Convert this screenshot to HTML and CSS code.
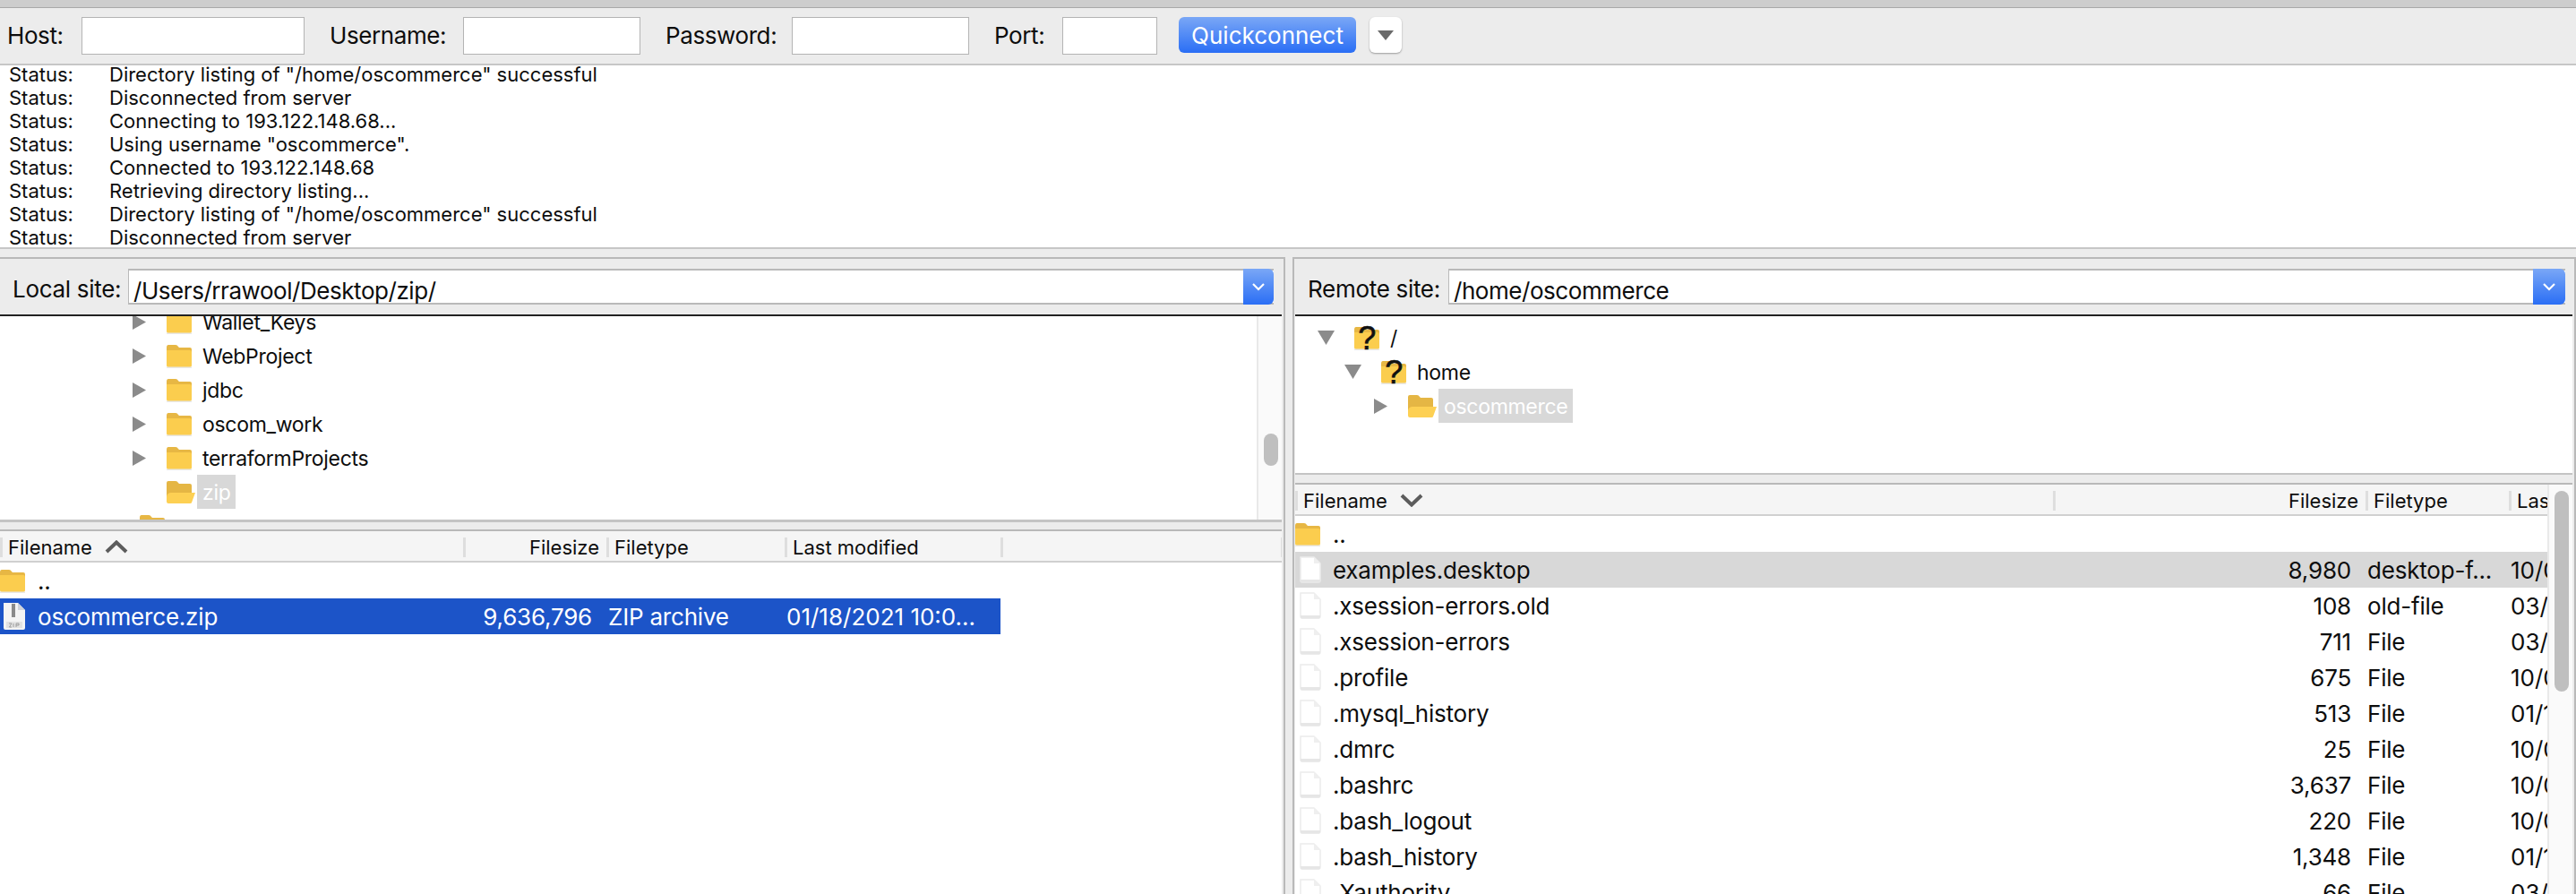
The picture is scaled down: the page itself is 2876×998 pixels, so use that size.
FILE: index.html
```html
<!DOCTYPE html>
<html lang="en">
<head>
<meta charset="utf-8">
<title>FileZilla</title>
<link rel="stylesheet" href="styles.css">
</head>
<body>
<svg class="defs" width="0" height="0" aria-hidden="true">
  <symbol id="folder" viewBox="0 0 28 27">
    <path d="M0 4 Q0 1 2 1 H10 Q12 1 13 3 L14 4 H26 Q28 4 28 6 V10 H0Z" fill="#e7b744"/>
    <path d="M0 7 H26 Q28 7 28 9 V24 Q28 26 26 26 H2 Q0 26 0 24Z" fill="#fbcd4e"/>
    <path d="M0 25.5 H28 V27 H0Z" fill="#e8e8e8"/>
  </symbol>
  <symbol id="folder-open" viewBox="0 0 32 27">
    <path d="M0 3 Q0 1 2 1 H10 Q12 1 13 3 L14 4 H26 Q28 4 28 6 V24 H0Z" fill="#e5b644"/>
    <path d="M5 14 H32 L28 25 Q28 26 26 26 H2 Q0 26 0 24 V18 Q1 14 5 14Z" fill="#fdd053"/>
  </symbol>
  <symbol id="file" viewBox="0 0 24 30">
    <path d="M1 1 H16 L23 8 V27 Q23 29 21 29 H3 Q1 29 1 27Z" fill="#fff" stroke="#ececec" stroke-width="1.5"/>
    <path d="M1 26 H23 V28 Q23 29.500 21 29.500 H3 Q1 29.500 1 28Z" fill="#e6e6e6"/>
    <path d="M16 1 L23 8 H16Z" fill="#efefef"/>
  </symbol>
  <symbol id="zipfile" viewBox="0 0 24 30">
    <path d="M0 0 H16 L24 8 V28 Q24 30 22 30 H2 Q0 30 0 28Z" fill="#f4f4f4"/>
    <path d="M16 0 L24 8 H16Z" fill="#cfd3da"/>
    <path d="M9 1 H13 V16 H9Z" fill="#8a8a8a"/>
    <path d="M3 21 H21 V28 H3Z" fill="#e2e2e2"/>
    <path d="M6 23 H9 L6.500 27 H9 M11 23 V27 M14 27 V23 H17 V25 H14" fill="none" stroke="#8f8f8f" stroke-width=".8"/>
  </symbol>
  <symbol id="tw-right" viewBox="0 0 15 17"><path d="M0 0 L15 8.500 L0 17Z" fill="#8b8b8b"/></symbol>
  <symbol id="tw-down" viewBox="0 0 19 16"><path d="M0 0 H19 L9.500 16Z" fill="#8b8b8b"/></symbol>
  <symbol id="chev" viewBox="0 0 16 10"><path d="M2 2 L8 8 L14 2" fill="none" stroke="#fff" stroke-width="2.200"/></symbol>
  <symbol id="sort-up" viewBox="0 0 26 15"><path d="M2 13 L13 2.500 L24 13" fill="none" stroke="#5c5c5c" stroke-width="4"/></symbol>
  <symbol id="sort-down" viewBox="0 0 26 15"><path d="M2 2 L13 12.500 L24 2" fill="none" stroke="#5c5c5c" stroke-width="4"/></symbol>
</svg>

<div class="app">
  <div class="titlebar"></div>

  <div class="toolbar">
    <label class="tb-label host-label">Host:</label><input class="tb-input host-input" type="text">
    <label class="tb-label user-label">Username:</label><input class="tb-input user-input" type="text">
    <label class="tb-label pass-label">Password:</label><input class="tb-input user-input" type="text">
    <label class="tb-label port-label">Port:</label><input class="tb-input port-input" type="text">
    <button class="quick" type="button">Quickconnect</button>
    <button class="quick-menu" type="button"><span class="menu-tri"></span></button>
  </div>

  <div class="log">
    <div class="log-line"><span class="log-kind">Status:</span><span>Directory listing of "/home/oscommerce" successful</span></div>
    <div class="log-line"><span class="log-kind">Status:</span><span>Disconnected from server</span></div>
    <div class="log-line"><span class="log-kind">Status:</span><span>Connecting to 193.122.148.68...</span></div>
    <div class="log-line"><span class="log-kind">Status:</span><span>Using username "oscommerce".</span></div>
    <div class="log-line"><span class="log-kind">Status:</span><span>Connected to 193.122.148.68</span></div>
    <div class="log-line"><span class="log-kind">Status:</span><span>Retrieving directory listing...</span></div>
    <div class="log-line"><span class="log-kind">Status:</span><span>Directory listing of "/home/oscommerce" successful</span></div>
    <div class="log-line"><span class="log-kind">Status:</span><span>Disconnected from server</span></div>
  </div>

  <div class="panes">
    <section class="pane pane-local">
      <div class="sitebar">
        <span class="site-label local-label">Local site:</span>
        <div class="combo"><span class="combo-text">/Users/rrawool/Desktop/zip/</span><span class="combo-btn"><svg class="chev"><use href="#chev"/></svg></span></div>
      </div>
      <div class="tree tree-local">
        <div class="tree-body tree-scrolled">
          <div class="node l3"><span class="tw"><svg class="tw-r"><use href="#tw-right"/></svg></span><span class="ic"><svg class="folder"><use href="#folder"/></svg></span><span class="node-label">Wallet_Keys</span></div>
          <div class="node l3"><span class="tw"><svg class="tw-r"><use href="#tw-right"/></svg></span><span class="ic"><svg class="folder"><use href="#folder"/></svg></span><span class="node-label">WebProject</span></div>
          <div class="node l3"><span class="tw"><svg class="tw-r"><use href="#tw-right"/></svg></span><span class="ic"><svg class="folder"><use href="#folder"/></svg></span><span class="node-label">jdbc</span></div>
          <div class="node l3"><span class="tw"><svg class="tw-r"><use href="#tw-right"/></svg></span><span class="ic"><svg class="folder"><use href="#folder"/></svg></span><span class="node-label">oscom_work</span></div>
          <div class="node l3"><span class="tw"><svg class="tw-r"><use href="#tw-right"/></svg></span><span class="ic"><svg class="folder"><use href="#folder"/></svg></span><span class="node-label">terraformProjects</span></div>
          <div class="node l3"><span class="tw"></span><span class="ic"><svg class="folder-open"><use href="#folder-open"/></svg></span><span class="node-label selected">zip</span></div>
          <div class="node l2"><span class="tw"></span><span class="ic"><svg class="folder"><use href="#folder"/></svg></span></div>
        </div>
        <div class="track"><div class="thumb thumb-tree"></div></div>
      </div>
      <div class="files files-local">
        <div class="file-table">
          <div class="fhead cols-local">
            <div class="hcell">Filename<svg class="sort"><use href="#sort-up"/></svg></div>
            <div class="hcell right">Filesize</div>
            <div class="hcell">Filetype</div>
            <div class="hcell">Last modified</div>
            <div class="hcell"></div>
            <div class="hcell"></div>
          </div>
          <div class="frow cols-local">
            <div class="fname"><svg class="folder"><use href="#folder"/></svg>..</div>
          </div>
          <div class="frow cols-local row-active">
            <div class="fname"><svg class="zip"><use href="#zipfile"/></svg>oscommerce.zip</div>
            <div class="fsize">9,636,796</div>
            <div class="ftype">ZIP archive</div>
            <div class="fdate">01/18/2021 10:0...</div>
          </div>
        </div>
      </div>
    </section>

    <section class="pane pane-remote">
      <div class="sitebar">
        <span class="site-label remote-label">Remote site:</span>
        <div class="combo combo-remote"><span class="combo-text">/home/oscommerce</span><span class="combo-btn"><svg class="chev"><use href="#chev"/></svg></span></div>
      </div>
      <div class="tree tree-remote">
        <div class="tree-body tree-top">
          <div class="node r0"><span class="tw"><svg class="tw-d"><use href="#tw-down"/></svg></span><span class="ic ic-q"><svg class="folder"><use href="#folder"/></svg><span class="q">?</span></span><span class="node-label">/</span></div>
          <div class="node r1"><span class="tw"><svg class="tw-d"><use href="#tw-down"/></svg></span><span class="ic ic-q"><svg class="folder"><use href="#folder"/></svg><span class="q">?</span></span><span class="node-label">home</span></div>
          <div class="node r2"><span class="tw"><svg class="tw-r"><use href="#tw-right"/></svg></span><span class="ic"><svg class="folder-open"><use href="#folder-open"/></svg></span><span class="node-label selected">oscommerce</span></div>
        </div>
      </div>
      <div class="files files-remote">
        <div class="file-table">
          <div class="fhead cols-remote">
            <div class="hcell">Filename<svg class="sort"><use href="#sort-down"/></svg></div>
            <div class="hcell right">Filesize</div>
            <div class="hcell">Filetype</div>
            <div class="hcell">Last</div>
          </div>
          <div class="frow cols-remote"><div class="fname"><svg class="folder"><use href="#folder"/></svg>..</div></div>
          <div class="frow cols-remote row-current"><div class="fname"><svg class="file"><use href="#file"/></svg>examples.desktop</div><div class="fsize">8,980</div><div class="ftype">desktop-f...</div><div class="fdate">10/0</div></div>
          <div class="frow cols-remote"><div class="fname"><svg class="file"><use href="#file"/></svg>.xsession-errors.old</div><div class="fsize">108</div><div class="ftype">old-file</div><div class="fdate">03/</div></div>
          <div class="frow cols-remote"><div class="fname"><svg class="file"><use href="#file"/></svg>.xsession-errors</div><div class="fsize">711</div><div class="ftype">File</div><div class="fdate">03/</div></div>
          <div class="frow cols-remote"><div class="fname"><svg class="file"><use href="#file"/></svg>.profile</div><div class="fsize">675</div><div class="ftype">File</div><div class="fdate">10/0</div></div>
          <div class="frow cols-remote"><div class="fname"><svg class="file"><use href="#file"/></svg>.mysql_history</div><div class="fsize">513</div><div class="ftype">File</div><div class="fdate">01/1</div></div>
          <div class="frow cols-remote"><div class="fname"><svg class="file"><use href="#file"/></svg>.dmrc</div><div class="fsize">25</div><div class="ftype">File</div><div class="fdate">10/0</div></div>
          <div class="frow cols-remote"><div class="fname"><svg class="file"><use href="#file"/></svg>.bashrc</div><div class="fsize">3,637</div><div class="ftype">File</div><div class="fdate">10/0</div></div>
          <div class="frow cols-remote"><div class="fname"><svg class="file"><use href="#file"/></svg>.bash_logout</div><div class="fsize">220</div><div class="ftype">File</div><div class="fdate">10/0</div></div>
          <div class="frow cols-remote"><div class="fname"><svg class="file"><use href="#file"/></svg>.bash_history</div><div class="fsize">1,348</div><div class="ftype">File</div><div class="fdate">01/1</div></div>
          <div class="frow cols-remote"><div class="fname"><svg class="file"><use href="#file"/></svg>.Xauthority</div><div class="fsize">66</div><div class="ftype">File</div><div class="fdate">03/</div></div>
        </div>
        <div class="track"><div class="thumb thumb-files"></div></div>
      </div>
    </section>
  </div>
</div>
</body>
</html>
```

FILE: styles.css
```css
* { box-sizing: border-box; }
html, body { margin: 0; height: 100%; overflow: hidden; }
body { background: #ececec; color: #0d0d0d; font-family: Inter, "Liberation Sans", sans-serif; }
.defs { display: block; height: 0; }
.app { height: 998px; overflow: hidden; }

.titlebar { height: 9px; background: #cdcdcd; border-bottom: 1px solid #a8a8a8; }

.toolbar { height: 64px; padding-top: 10px; display: flex; align-items: flex-start; border-bottom: 2px solid #c6c6c6; background: #ececec; font-size: 26px; }
.tb-label { height: 42px; line-height: 42px; margin-left: 28px; letter-spacing: -0.4px; white-space: nowrap; }
.host-label { margin-left: 8px; width: 83px; }
.user-label { width: 149px; }
.pass-label { width: 141px; }
.port-label { width: 76px; }
.tb-input { height: 42px; padding: 0; background: #fff; border: 1.5px solid #b4b4b4; outline: none; }
.host-input { width: 249px; }
.user-input { width: 198px; }
.port-input { width: 106px; }
.quick { margin-left: 24px; width: 198px; height: 40px; padding: 0; border: 0; border-radius: 6px; background: linear-gradient(#7aa7f6, #2a6ef5); color: #fff; font: inherit; font-size: 26px; }
.quick-menu { margin-left: 15px; width: 36px; height: 40px; padding: 0; border: 0; border-radius: 6px; background: #fff; box-shadow: 0 1px 2px rgba(0,0,0,.35); display: flex; align-items: center; justify-content: center; }
.menu-tri { width: 0; height: 0; border-left: 9px solid transparent; border-right: 9px solid transparent; border-top: 11px solid #6a6a6a; }

.log { height: 205px; background: #fff; border-bottom: 2px solid #c6c6c6; font-size: 22px; }
.log-line { height: 26px; line-height: 26px; display: flex; padding-left: 10px; white-space: nowrap; }
.log-line:first-child { height: 23px; line-height: 20px; }
.log-line:last-child { height: 22px; line-height: 22px; margin-top: 2px; }
.log-kind { width: 112px; }

.panes { display: grid; grid-template-columns: 1435px 1fr; column-gap: 8px; padding-top: 9px; height: 721px; }
.pane { min-width: 0; height: 711px; border-top: 2px solid #b9b9b9; border-right: 2px solid #b9b9b9; padding-right: 2px; display: flex; flex-direction: column; }
.pane-remote { border-left: 2px solid #b9b9b9; padding-left: 1px; }

.sitebar { height: 62px; flex: none; padding: 11px 0 0 14px; display: flex; align-items: flex-start; }
.site-label { height: 40px; line-height: 46px; font-size: 26px; letter-spacing: -0.3px; white-space: nowrap; }
.local-label { width: 129px; }
.remote-label { width: 157px; }
.combo { flex: 1; height: 40px; margin-right: 9px; display: flex; background: #fff; border-top: 2px solid #b9b9b9; border-bottom: 2px solid #b9b9b9; border-left: 1px solid #b9b9b9; }
.combo-remote { margin-right: 8px; }
.combo-text { flex: 1; padding-left: 5px; height: 36px; line-height: 46px; font-size: 26px; letter-spacing: -0.45px; }
.combo-btn { width: 34px; height: 40px; margin: -2px 0; border-radius: 0 6px 6px 0; background: linear-gradient(#7aa7f6, #2a6ef5); display: flex; align-items: center; justify-content: center; }
.combo-remote .combo-btn { width: 36px; }
.chev { width: 16px; height: 10px; }

.tree { flex: none; display: flex; overflow: hidden; border-top: 2px solid #222; background: #fff; }
.tree-local { height: 232px; border-bottom: 3px solid #c4c4c4; }
.tree-remote { height: 179px; border-bottom: 2px solid #c4c4c4; }
.tree-body { flex: 1; min-width: 0; font-size: 23px; letter-spacing: -0.3px; }
.tree-scrolled { margin-top: -13px; }
.tree-top { padding-top: 5px; }
.node { height: 38px; display: flex; align-items: center; white-space: nowrap; }
.l3 { padding-left: 148px; }
.l2 { padding-left: 118px; }
.r0 { padding-left: 28px; }
.r1 { padding-left: 58px; }
.r2 { padding-left: 88px; }
.tw { width: 38px; flex: none; display: flex; align-items: center; }
.tw-r { width: 15px; height: 17px; }
.tw-d { width: 19px; height: 16px; margin-left: -3px; }
.ic { width: 34px; flex: none; display: flex; position: relative; }
.folder { width: 28px; height: 27px; flex: none; }
.folder-open { width: 32px; height: 27px; flex: none; }
.node-label { height: 38px; line-height: 40px; padding: 0 6px; }
.selected { background: #d8d8d8; color: #fff; }
.q { position: absolute; left: 0; top: -6px; width: 28px; text-align: center; font-size: 36px; line-height: 40px; font-weight: 400; -webkit-text-stroke: 0.6px #111; color: #111; font-family: "Liberation Sans", sans-serif; }

.track { width: 28px; flex: none; background: #fafafa; border-left: 2px solid #e9e9e9; }
.thumb { width: 16px; margin-left: 6px; border-radius: 8px; background: #bfbfbf; }
.thumb-tree { height: 36px; margin-top: 131px; }
.thumb-files { height: 224px; margin-top: 7px; }

.files { flex: 1; min-height: 0; display: flex; background: #fff; border-top: 2px solid #b9b9b9; overflow: hidden; }
.files-local { margin-top: 8px; }
.files-remote { margin-top: 9px; }
.file-table { flex: 1; min-width: 0; overflow: hidden; font-size: 26px; }
.fhead { height: 35px; padding-top: 2px; display: grid; align-items: center; background: #f5f5f5; border-bottom: 2px solid #d0d0d0; font-size: 22px; }
.frow { height: 40px; display: grid; align-items: center; white-space: nowrap; }
.cols-local { grid-template-columns: 517px 160px 199px 241px 313px 1px; width: 1431px; }
.frow.cols-local { width: 1117px; grid-template-columns: 517px 160px 199px 241px; }
.cols-remote { grid-template-columns: 846px 349px 160px 60px; }
.hcell { height: 22px; line-height: 22px; border-left: 3px solid #dedede; padding-left: 6px; display: flex; align-items: center; white-space: nowrap; }
.hcell.right { justify-content: flex-end; padding-right: 8px; }
.sort { width: 26px; height: 15px; margin-left: 14px; }
.fname { display: flex; align-items: center; letter-spacing: -0.2px; }
.fname .folder { margin-right: 14px; }
.file { width: 24px; height: 30px; margin: 0 13px 0 5px; flex: none; }
.zip { width: 24px; height: 30px; margin: 0 14px 0 4px; flex: none; }
.fsize { text-align: right; padding-right: 16px; letter-spacing: -0.2px; }
.ftype { padding-left: 2px; letter-spacing: -0.2px; }
.fdate { padding-left: 2px; }
.row-active { background: #1c54c8; color: #fff; }
.row-current { background: #d8d8d8; }
```
